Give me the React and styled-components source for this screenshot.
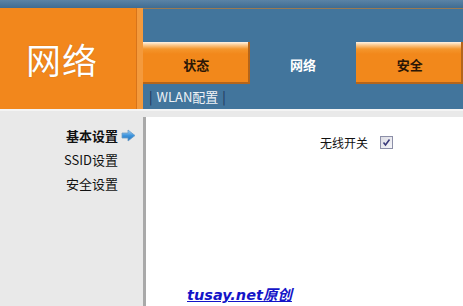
import styled, { createGlobalStyle } from "styled-components";

const GlobalStyle = createGlobalStyle`
  html, body {
    margin: 0;
    padding: 0;
    height: 100%;
    overflow: hidden;
  }
  body {
    font-family: "Noto Sans CJK SC", "DejaVu Sans", sans-serif;
    background-color: #e9e9e9;
  }
  #root {
    height: 100%;
  }
`;

const Page = styled.div`
  display: flex;
  flex-direction: column;
  height: 100%;
`;

const TopStrip = styled.div`
  height: 8px;
  background: linear-gradient(to bottom, #5a83a6, #3f6c92);
  flex-shrink: 0;
`;

const Header = styled.div`
  display: grid;
  grid-template-columns: 143px 1fr;
  height: 101px;
  flex-shrink: 0;
`;

const Logo = styled.div`
  display: flex;
  align-items: center;
  padding-left: 26px;
  background-color: #f2871c;
  box-shadow: inset -6px 0 0 #f49a3c, inset -7px 0 0 #d8741a;
  color: #ffffff;
  font-size: 35px;
  letter-spacing: 1px;
  text-shadow: 0 0 1px rgba(120, 60, 0, 0.5);
`;

const NavArea = styled.div`
  display: flex;
  flex-direction: column;
  background-color: #42759c;
  border-top: 1px solid #9a7a52;
`;

const Tabs = styled.div`
  display: grid;
  grid-template-columns: repeat(3, 1fr);
  height: 42px;
  margin-top: 33px;
`;

const Tab = styled.div`
  display: flex;
  align-items: center;
  justify-content: center;
  padding-top: 3px;
  font-size: 13px;
  font-weight: bold;
  color: ${(p) => (p.$active ? "#ffffff" : "#2a1606")};
  background: ${(p) =>
    p.$active
      ? "transparent"
      : "linear-gradient(to bottom, #fff4e6 0px, #fbc98e 3px, #f4962c 7px, #f2881b 12px, #f2881b 100%)"};
  box-shadow: ${(p) =>
    p.$active ? "none" : "inset -2px -2px 0 #b5651a"};
`;

const SubNav = styled.div`
  display: flex;
  align-items: center;
  gap: 4px;
  padding-left: 6px;
  height: 24px;
  font-size: 13px;
  color: #eef2f6;
`;

const Pipe = styled.span`
  color: #1c2f5a;
`;

const Body = styled.div`
  flex: 1;
  display: grid;
  grid-template-columns: 143px 1fr;
  border-top: 2px solid #f4f4f4;
  min-height: 0;
`;

const Sidebar = styled.div`
  display: flex;
  flex-direction: column;
  align-items: flex-end;
  padding-top: 15px;
  padding-right: 25px;
  gap: 4px;
  background-color: #e9e9e9;
`;

const SideItem = styled.div`
  position: relative;
  height: 20px;
  line-height: 20px;
  font-size: 13px;
  color: #111111;
  font-weight: ${(p) => (p.$active ? "bold" : "normal")};
`;

const ArrowIcon = styled.svg`
  position: absolute;
  left: calc(100% + 3px);
  top: 3px;
`;

const Main = styled.div`
  padding-top: 6px;
  background-color: #e9e9e9;
  display: flex;
`;

const Panel = styled.div`
  flex: 1;
  display: flex;
  flex-direction: column;
  background-color: #ffffff;
  border-left: 3px solid #a9a9a9;
`;

const FieldRow = styled.div`
  display: flex;
  align-items: center;
  gap: 12px;
  padding-left: 174px;
  margin-top: 17px;
  font-size: 12px;
  color: #111111;
`;

const CheckBox = styled.span`
  display: inline-flex;
  align-items: center;
  justify-content: center;
  width: 11px;
  height: 11px;
  border: 1px solid #8c8fa8;
  background: linear-gradient(to bottom right, #dcdce4, #f6f6f9);
`;

const Credit = styled.a`
  margin-top: auto;
  margin-bottom: 2px;
  margin-left: 41px;
  font-size: 14.5px;
  font-weight: bold;
  font-style: italic;
  color: #1414c8;
  text-decoration: underline;
  font-family: "DejaVu Sans", "Noto Sans CJK SC", sans-serif;
`;

function App() {
  return (
    <Page>
      <GlobalStyle />
      <TopStrip />
      <Header>
        <Logo>网络</Logo>
        <NavArea>
          <Tabs>
            <Tab>状态</Tab>
            <Tab $active>网络</Tab>
            <Tab>安全</Tab>
          </Tabs>
          <SubNav>
            <Pipe>|</Pipe>
            <span>WLAN配置</span>
            <Pipe>|</Pipe>
          </SubNav>
        </NavArea>
      </Header>
      <Body>
        <Sidebar>
          <SideItem $active>
            基本设置
            <ArrowIcon width="15" height="13" viewBox="0 0 15 13">
              <defs>
                <linearGradient id="arr" x1="0" y1="0" x2="0" y2="1">
                  <stop offset="0" stopColor="#a9d4f5" />
                  <stop offset="0.5" stopColor="#3f95dd" />
                  <stop offset="1" stopColor="#1f6fb8" />
                </linearGradient>
              </defs>
              <path
                d="M1 4 H7 V1 L14 6.5 L7 12 V9 H1 Z"
                fill="url(#arr)"
                stroke="#6b9cc7"
                strokeWidth="0.8"
              />
            </ArrowIcon>
          </SideItem>
          <SideItem>SSID设置</SideItem>
          <SideItem>安全设置</SideItem>
        </Sidebar>
        <Main>
          <Panel>
            <FieldRow>
              <span>无线开关</span>
              <CheckBox>
                <svg width="9" height="9" viewBox="0 0 9 9">
                  <path
                    d="M1.5 4.5 L3.5 7 L7.5 1.5"
                    fill="none"
                    stroke="#3a3a7a"
                    strokeWidth="1.6"
                  />
                </svg>
              </CheckBox>
            </FieldRow>
            <Credit href="#">tusay.net原创</Credit>
          </Panel>
        </Main>
      </Body>
    </Page>
  );
}

export default App;
